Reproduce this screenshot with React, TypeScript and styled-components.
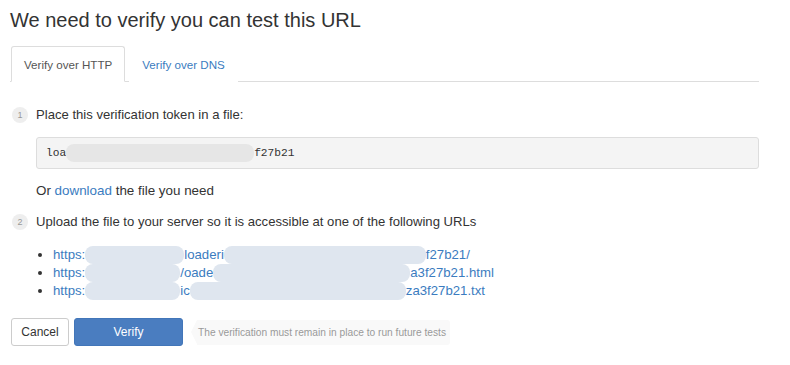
import React from "react";
import styled, { createGlobalStyle } from "styled-components";

const Global = createGlobalStyle`
  html, body { margin: 0; padding: 0; background: #fff; }
  body { font-family: "Liberation Sans", Arial, sans-serif; color: #333; }
`;

const Page = styled.div`
  width: 790px;
  height: 365px;
  padding: 8px 31px 0 10px;
  box-sizing: border-box;
  overflow: hidden;
`;

const Title = styled.h1`
  margin: 0;
  font-size: 20px;
  font-weight: normal;
  line-height: 24px;
  color: #333;
`;

const Tabs = styled.div`
  display: flex;
  margin-top: 14px;
  border-bottom: 1px solid #ddd;
  height: 35px;
  padding-left: 1px;
`;

const Tab = styled.div<{ $active?: boolean }>`
  padding: 0 12px;
  height: 36px;
  box-sizing: border-box;
  display: flex;
  align-items: center;
  font-size: 11.6px;
  border: 1px solid ${(p) => (p.$active ? "#ddd" : "transparent")};
  border-bottom-color: ${(p) => (p.$active ? "#fff" : "transparent")};
  border-radius: 3px 3px 0 0;
  margin-bottom: -1px;
  background: #fff;
  color: ${(p) => (p.$active ? "#555" : "#3b7cc0")};
  & + & { margin-left: 4px; }
`;

const Step = styled.div<{ $gap: number }>`
  display: flex;
  align-items: center;
  gap: 8px;
  margin-top: ${(p) => p.$gap}px;
  padding-left: 2px;
  font-size: 13.1px;
  line-height: 20px;
`;

const Badge = styled.span`
  width: 16px;
  height: 16px;
  border-radius: 50%;
  background: #eee;
  color: #999;
  font-size: 9px;
  display: flex;
  align-items: center;
  justify-content: center;
`;

const Indent = styled.div`
  padding-left: 26px;
`;

const TokenBox = styled.div`
  margin-top: 12px;
  height: 32px;
  box-sizing: border-box;
  background: #f4f4f4;
  border: 1px solid #ddd;
  border-radius: 3px;
  display: flex;
  align-items: center;
  padding-left: 9px;
  font-family: "Liberation Mono", "Courier New", monospace;
  font-size: 11.2px;
  color: #333;
  white-space: pre;
`;

const Redact = styled.span<{ $w: number; $c?: string }>`
  display: inline-block;
  width: ${(p) => p.$w}px;
  height: 18px;
  vertical-align: top;
  background: ${(p) => p.$c ?? "#dfe6ef"};
  border-radius: 8px;
`;

const Note = styled.p`
  margin: 12px 0 0;
  font-size: 13.4px;
  line-height: 20px;
`;

const Link = styled.a`
  color: #3b7cc0;
  text-decoration: none;
`;

const Urls = styled.ul`
  margin: 14px 0 0;
  padding-left: 17px;
  font-size: 13.2px;
  line-height: 18px;
  li { white-space: nowrap; }
  li::marker { color: #333; }
`;

const Actions = styled.div`
  display: flex;
  align-items: center;
  margin-top: 18px;
  padding-left: 1px;
  gap: 5px;
`;

const Button = styled.button<{ $primary?: boolean }>`
  height: 28px;
  box-sizing: border-box;
  font-family: "Liberation Sans", Arial, sans-serif;
  font-size: 12px;
  border-radius: 3px;
  border: 1px solid ${(p) => (p.$primary ? "#4276b9" : "#ccc")};
  background: ${(p) => (p.$primary ? "#4a7dc0" : "#fff")};
  color: ${(p) => (p.$primary ? "#fff" : "#333")};
  width: ${(p) => (p.$primary ? "109px" : "58px")};
  padding: 0;
`;

const Hint = styled.div`
  position: relative;
  margin-left: 9px;
  height: 25px;
  display: flex;
  align-items: center;
  padding: 0 4px 0 1px;
  background: #f9f9f9;
  color: #999;
  font-size: 10.2px;
  border-radius: 0 3px 3px 0;
  &::before {
    content: "";
    position: absolute;
    left: -6px;
    top: 0;
    border-top: 12.5px solid transparent;
    border-bottom: 12.5px solid transparent;
    border-right: 6px solid #f9f9f9;
  }
`;

export default function App() {
  return (
    <Page>
      <Global />
      <Title>We need to verify you can test this URL</Title>
      <Tabs>
        <Tab $active>Verify over HTTP</Tab>
        <Tab>Verify over DNS</Tab>
      </Tabs>
      <Step $gap={23}>
        <Badge>1</Badge>
        <span>Place this verification token in a file:</span>
      </Step>
      <Indent>
        <TokenBox>
          loa<Redact $w={188} $c="#e6e6e6" />f27b21
        </TokenBox>
        <Note>
          Or <Link href="#">download</Link> the file you need
        </Note>
      </Indent>
      <Step $gap={11}>
        <Badge>2</Badge>
        <span>Upload the file to your server so it is accessible at one of the following URLs</span>
      </Step>
      <Indent>
        <Urls>
          <li>
            <Link href="#">
              https:<Redact $w={99} />loaderi<Redact $w={202} />f27b21/
            </Link>
          </li>
          <li>
            <Link href="#">
              https:<Redact $w={95} />/oade<Redact $w={197} />a3f27b21.html
            </Link>
          </li>
          <li>
            <Link href="#">
              https:<Redact $w={95} />ic<Redact $w={216} />za3f27b21.txt
            </Link>
          </li>
        </Urls>
      </Indent>
      <Actions>
        <Button>Cancel</Button>
        <Button $primary>Verify</Button>
        <Hint>The verification must remain in place to run future tests</Hint>
      </Actions>
    </Page>
  );
}
